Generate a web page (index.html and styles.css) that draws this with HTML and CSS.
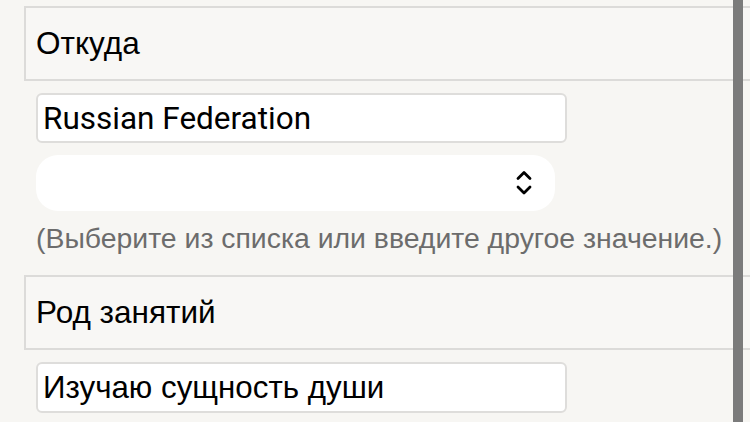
FILE: index.html
```html
<!DOCTYPE html>
<html lang="ru">
<head>
<meta charset="UTF-8">
<meta name="viewport" content="width=device-width, initial-scale=1.0">
<title>Профиль</title>
<link rel="stylesheet" href="styles.css">
</head>
<body>
<div class="screen">
    <form class="page">
        <div class="field-head">Откуда</div>
        <div class="field-body field-country">
            <input type="text" class="text-input latin" name="country" value="Russian Federation">
            <div class="select-wrap">
                <select class="select-box" name="country_list">
                    <option value=""></option>
                </select>
                <svg class="select-arrows" width="16" height="26" viewBox="0 0 16 26">
                    <path d="M2 8.5 L8 2.5 L14 8.5" fill="none" stroke="#000" stroke-width="2.8" stroke-linecap="round" stroke-linejoin="round"/>
                    <path d="M2 17 L8 23 L14 17" fill="none" stroke="#000" stroke-width="2.8" stroke-linecap="round" stroke-linejoin="round"/>
                </svg>
            </div>
            <div class="hint">(Выберите из списка или введите другое значение.)</div>
        </div>
        <div class="field-head">Род занятий</div>
        <div class="field-body">
            <input type="text" class="text-input" name="occupation" value="Изучаю сущность души">
        </div>
    </form>
    <div class="side-rest">
        <div class="head-tail"></div>
        <div class="head-tail"></div>
    </div>
</div>
</body>
</html>
```

FILE: styles.css
```css
body {
    margin: 0;
    background-color: #f7f6f3;
    font-family: "Liberation Sans", Arial, sans-serif;
    color: #000;
    overflow: hidden;
}
.screen {
    display: flex;
    width: 750px;
    height: 422px;
}
.page {
    flex: 0 0 743px;
    padding: 6px 5px 0 24px;
    box-sizing: border-box;
    border-right: 5px solid #7b7b7b;
    box-shadow: inset -5px 0 0 #7b7b7b;
}
.side-rest {
    flex: 1;
    display: flex;
    flex-direction: column;
    gap: 194px;
    padding-top: 6px;
}
.head-tail {
    height: 71px;
    border-top: 2px solid #dcdbd9;
    border-bottom: 2px solid #dcdbd9;
    background-color: #f8f7f5;
}
.field-head {
    height: 71px;
    border: 2px solid #dcdbd9;
    border-right: 0;
    background-color: #f8f7f5;
    display: flex;
    align-items: center;
    padding-left: 10px;
    font-size: 31.5px;
}
.field-body {
    display: flex;
    flex-direction: column;
    align-items: flex-start;
    gap: 12px;
    padding: 12px 0 0 12px;
}
.field-country {
    height: 194px;
    box-sizing: border-box;
}
.text-input {
    box-sizing: border-box;
    width: 531px;
    height: 51px;
    border: 2px solid #dedddb;
    border-radius: 6px;
    background-color: #fff;
    padding: 0 5px;
    font-family: "Liberation Sans", Arial, sans-serif;
    font-size: 31.3px;
    color: #000;
    outline: none;
}
.text-input.latin {
    font-family: Roboto, sans-serif;
    font-size: 31.5px;
    height: 50px;
}
.select-wrap {
    position: relative;
    width: 519px;
    height: 56px;
}
.select-box {
    appearance: none;
    -webkit-appearance: none;
    width: 100%;
    height: 100%;
    border: 0;
    border-radius: 22px;
    background-color: #fff;
    font-size: 26px;
    outline: none;
}
.select-arrows {
    position: absolute;
    right: 23px;
    top: 15px;
    pointer-events: none;
}
.hint {
    margin-top: -1px;
    font-size: 28.4px;
    color: #6c6c6c;
    white-space: nowrap;
}
```
